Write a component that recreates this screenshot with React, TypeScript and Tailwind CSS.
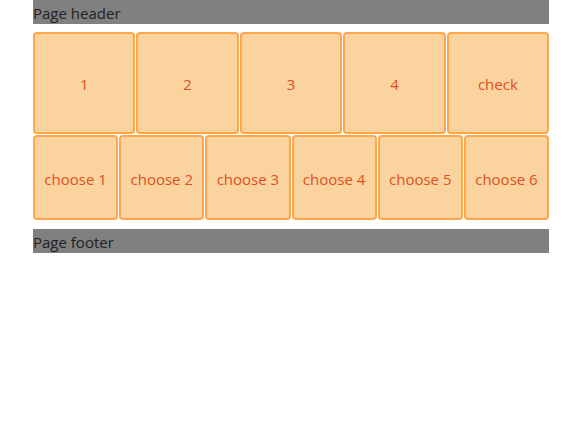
const topCells = ['1', '2', '3', '4', 'check'];
const bottomCells = ['choose 1', 'choose 2', 'choose 3', 'choose 4', 'choose 5', 'choose 6'];

const Cell = ({ label, tall }: { label: string; tall?: boolean }) => (
  <div
    className={`flex flex-1 items-center justify-center rounded-[4px] border-2 border-[#ffa64d] bg-[#fad39e] pt-[3px] text-[15px] text-[#e0501e] ${
      tall ? 'h-[102px]' : 'h-[85px]'
    }`}
  >
    {label}
  </div>
);

export default function App() {
  return (
    <div className="min-h-[422px] bg-white px-[33px] font-['Open_Sans',sans-serif]">
      <div className="flex w-[516px] flex-col">
        <div className="h-6 bg-[#808080] pt-px text-[15px] leading-6 text-[#222]">Page header</div>
        <div className="mt-2 flex gap-px">
          {topCells.map((c) => (
            <Cell key={c} label={c} tall />
          ))}
        </div>
        <div className="mt-px flex gap-px">
          {bottomCells.map((c) => (
            <Cell key={c} label={c} />
          ))}
        </div>
        <div className="mt-[9px] h-6 bg-[#808080] pt-px text-[15px] leading-6 text-[#222]">Page footer</div>
      </div>
    </div>
  );
}
